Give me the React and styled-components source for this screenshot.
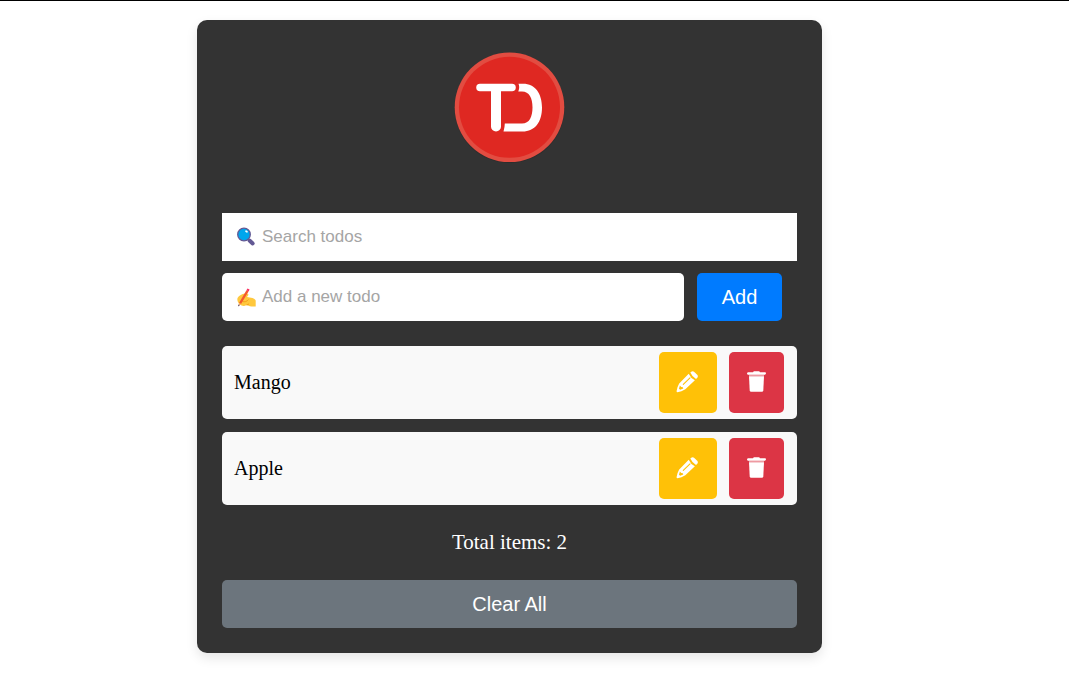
import React, { useState } from "react";
import styled, { createGlobalStyle } from "styled-components";

const GlobalStyle = createGlobalStyle`
  *, *::before, *::after { box-sizing: border-box; }
  body {
    margin: 0;
    background: #fff;
    font-family: "Liberation Serif", "Times New Roman", serif;
  }
`;

const Page = styled.div`
  border-top: 1px solid #000;
  padding: 19px 50px 24px 0;
`;

const Card = styled.main`
  max-width: 625px;
  margin: 0 auto;
  padding: 25px;
  border-radius: 10px;
  background: #333;
  box-shadow: 0 5px 12px rgba(0, 0, 0, 0.1);
`;

const Logo = styled.svg`
  display: block;
  width: 125px;
  height: 125px;
  margin: 0 auto 43px;
`;

const Field = styled.label`
  display: flex;
  flex: 1;
  align-items: center;
  gap: 6px;
  height: 48px;
  min-width: 0;
  padding: 0 14px;
  background: #fff;
  border-radius: ${(p) => (p.$rounded ? "5px" : "0")};

  svg {
    flex: none;
    width: 20px;
    height: 20px;
  }
`;

const TextInput = styled.input`
  flex: 1;
  min-width: 0;
  height: 100%;
  padding: 0;
  border: 0;
  outline: 0;
  background: transparent;
  color: #222;
  font: 17px "Liberation Sans", Arial, sans-serif;

  &::placeholder {
    color: #a5a5a5;
    opacity: 1;
  }
`;

const AddForm = styled.form`
  display: flex;
  gap: 13px;
  margin: 12px 15px 25px 0;
`;

const Button = styled.button`
  height: 48px;
  width: ${(p) => p.$width || "100%"};
  padding: 0;
  border: 0;
  border-radius: 5px;
  background: ${(p) => p.$color};
  color: #fff;
  font: 20px "Liberation Sans", Arial, sans-serif;
  cursor: pointer;
`;

const List = styled.ul`
  display: grid;
  gap: 13px;
  margin: 0;
  padding: 0;
  list-style: none;
`;

const Item = styled.li`
  display: flex;
  align-items: center;
  gap: 12px;
  padding: 6px 13px 6px 12px;
  border-radius: 5px;
  background: #f9f9f9;
  color: #000;
  font-size: 20px;
`;

const ItemText = styled.span`
  flex: 1;
`;

const IconButton = styled.button`
  display: grid;
  place-items: center;
  width: ${(p) => p.$width};
  height: 61px;
  padding: 0;
  border: 0;
  border-radius: 5px;
  background: ${(p) => p.$color};
  color: #fff;
  cursor: pointer;
`;

const Total = styled.p`
  margin: 25px 0;
  color: #fff;
  font-size: 21px;
  line-height: 25px;
  text-align: center;
`;

function TodoLogo() {
  return (
    <Logo viewBox="0 0 125 125" role="img" aria-label="Todo logo">
      <circle cx="62.5" cy="63" r="55" fill="#222" opacity="0.35" />
      <circle cx="62.5" cy="62.3" r="54.8" fill="#e24c41" />
      <circle cx="62.5" cy="62.3" r="50.5" fill="#df2822" />
      <path d="M33 42.500H65" fill="none" stroke="#fff" strokeWidth="7.500" strokeLinecap="round" />
      <path d="M44 44H54V81.500A5 5 0 0 1 44 81.500Z" fill="#fff" />
      <path
        d="M71.500 38.700H76C88.500 38.700 95 49 95 62.500C95 77 88 86.500 75.500 86.500H56.500Q57.800 82 57.800 78.600H75C82.500 78.600 85.500 71.500 85.500 62.500C85.500 53 82.300 46.500 75 46.500H71.300Q73 42.500 71.500 38.700Z"
        fill="#fff"
      />
    </Logo>
  );
}

function MagnifierIcon() {
  return (
    <svg viewBox="0 0 20 20" aria-hidden="true">
      <path d="M13.500 13.500L16.700 16.500" stroke="#635994" strokeWidth="4" strokeLinecap="round" />
      <circle cx="8" cy="7.500" r="6.300" fill="#00a6ed" stroke="#635994" strokeWidth="1.300" />
      <ellipse cx="10.500" cy="4.500" rx="1.500" ry="1" fill="#fff" transform="rotate(35 10.500 4.500)" />
    </svg>
  );
}

function WritingHandIcon() {
  return (
    <svg viewBox="0 0 20 20" aria-hidden="true">
      <path
        d="M1.500 11C3 8.500 6 7 9 6.500C11.500 6.300 13 7 12.300 8.300L11 10L16.500 11C18 11.500 19.200 12.500 19.700 13.500V19.500H15.500C13 19.300 12 18.500 10.500 18C8.500 19.500 5.500 19 4 17.500C2 16 .8 13 1.500 11Z"
        fill="#ffc83d"
      />
      <path d="M6.500 14.500C8.500 15.300 11 14.500 12.500 12.500M10.500 18L13 17" stroke="#f59f1c" strokeWidth="1" fill="none" />
      <path d="M11.500 3.800L4 16.500" stroke="#f4592f" strokeWidth="2.400" />
      <path d="M12.500 2L11.500 3.800" stroke="#f92f60" strokeWidth="2.400" />
      <path d="M3 15.800L5 17L2.500 19Z" fill="#f3ad61" />
      <path d="M2.700 17.500L3.700 18.200L2 19.500Z" fill="#321b41" />
    </svg>
  );
}

function PencilIcon() {
  return (
    <svg width="24" height="24" viewBox="0 0 24 24" fill="currentColor" aria-hidden="true">
      <path d="M14.300 1.600L15.700 .5Q17 -.2 18.300 .900L21.200 3.800Q22.500 5.300 21.300 6.700L20 8Q16.300 6 14.300 1.600Z" />
      <path
        fillRule="evenodd"
        d="M12.700 2.700Q14.500 7 18.900 9.300L9.300 18.200Q5.500 20.500 1.500 21.300Q.4 21.200 .6 20Q1.200 16 3.200 12.600ZM3.900 14.500L3 17.700L4.200 18.800L7.300 17.500L6.800 16.200L5.200 16Z"
      />
      <path d="M7.300 13.300L14 6.800" stroke="#ffc107" strokeWidth="1.100" strokeLinecap="round" />
    </svg>
  );
}

function TrashIcon() {
  return (
    <svg width="23" height="24" viewBox="0 0 23 24" fill="currentColor" aria-hidden="true">
      <path d="M3 1.200H8L8.800 .2H14.200L15 1.200H20Q21 1.300 21 2.300T20 3.700H3Q2 3.500 2 2.500T3 1.200Z" />
      <path d="M4 5.200H19L18.300 19.200Q18.200 20.700 16.800 20.700H6.200Q4.800 20.700 4.700 19.200Z" />
      <path d="M4 3.700H19V5.200H4Z" opacity="0.500" />
    </svg>
  );
}

export default function App() {
  const [todos, setTodos] = useState(["Mango", "Apple"]);
  const [query, setQuery] = useState("");
  const [draft, setDraft] = useState("");

  const addTodo = (event) => {
    event.preventDefault();
    if (!draft.trim()) return;
    setTodos([...todos, draft.trim()]);
    setDraft("");
  };

  const editTodo = (index) => {
    setDraft(todos[index]);
    setTodos(todos.filter((_, i) => i !== index));
  };

  const visible = todos
    .map((text, index) => ({ text, index }))
    .filter(({ text }) => text.toLowerCase().includes(query.toLowerCase()));

  return (
    <>
      <GlobalStyle />
      <Page>
        <Card>
          <TodoLogo />
          <Field htmlFor="search">
            <MagnifierIcon />
            <TextInput
              id="search"
              aria-label="Search todos"
              placeholder="Search todos"
              value={query}
              onChange={(e) => setQuery(e.target.value)}
            />
          </Field>
          <AddForm onSubmit={addTodo}>
            <Field htmlFor="new-todo" $rounded>
              <WritingHandIcon />
              <TextInput
                id="new-todo"
                aria-label="Add a new todo"
                placeholder="Add a new todo"
                value={draft}
                onChange={(e) => setDraft(e.target.value)}
              />
            </Field>
            <Button type="submit" $width="85px" $color="#007bff">Add</Button>
          </AddForm>
          <List>
            {visible.map(({ text, index }) => (
              <Item key={index}>
                <ItemText>{text}</ItemText>
                <IconButton type="button" aria-label={`Edit ${text}`} $width="58px" $color="#ffc107" onClick={() => editTodo(index)}>
                  <PencilIcon />
                </IconButton>
                <IconButton
                  type="button"
                  aria-label={`Delete ${text}`}
                  $width="55px"
                  $color="#dc3545"
                  onClick={() => setTodos(todos.filter((_, i) => i !== index))}
                >
                  <TrashIcon />
                </IconButton>
              </Item>
            ))}
          </List>
          <Total>Total items: {todos.length}</Total>
          <Button type="button" $color="#6c757d" onClick={() => setTodos([])}>Clear All</Button>
        </Card>
      </Page>
    </>
  );
}
